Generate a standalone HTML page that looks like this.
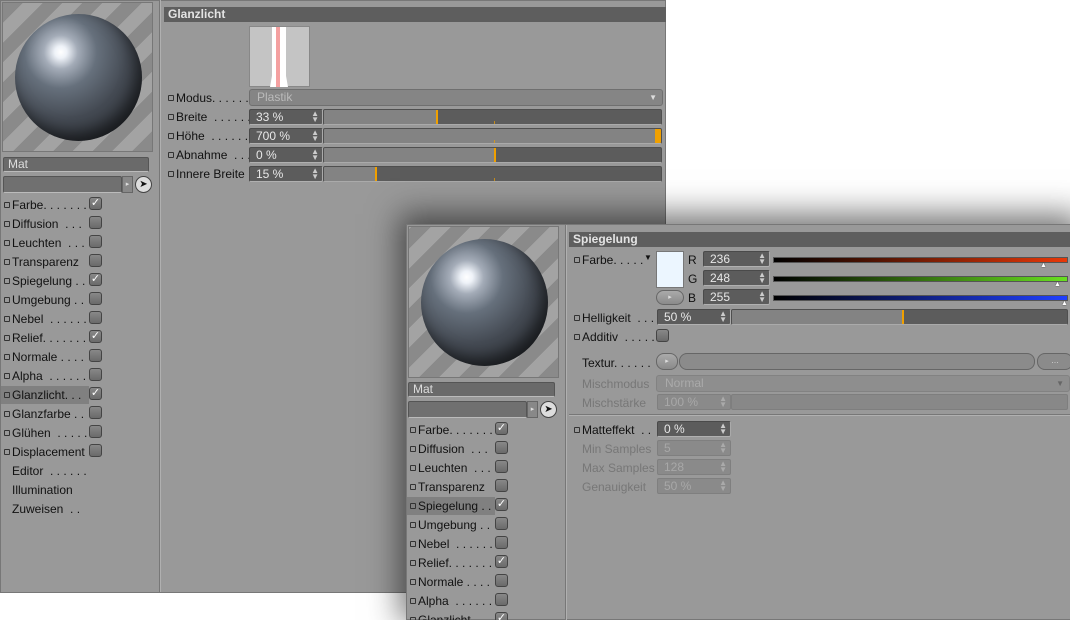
<!DOCTYPE html>
<html style="overflow:hidden;width:1070px;height:620px"><head><meta charset="utf-8"><style>
*{margin:0;padding:0;box-sizing:border-box}
body{width:1070px;height:620px;background:#fff;position:relative;overflow:hidden;font-family:"Liberation Sans",sans-serif;font-size:12px;color:#111}
.a{position:absolute}
.win{position:absolute;background:#999;border:1px solid #777}
.prev{position:absolute;background:repeating-linear-gradient(-45deg,#8a8a8a 0 14px,#a3a3a3 14px 28px);border:1px solid #777;overflow:hidden}
.sph{position:absolute;border-radius:50%;background:radial-gradient(circle at 36% 30%,#fff 0,#eef2f8 5%,#a4acb8 14%,#66707c 30%,#454b54 55%,#30343a 80%,#24262a 100%);box-shadow:inset -6px -8px 14px rgba(0,0,0,.5)}
.fld{position:absolute;background:#5c5c5c;border:1px solid #4a4a4a;border-bottom-color:#b0b0b0;border-right-color:#aaa;border-radius:2px;color:#e8e8e8;font-size:12px;padding-left:6px;line-height:14px}
.fld.dis{background:#8a8a8a;color:#a8a8a8;border-color:#7f7f7f}
.arr{position:absolute;right:3px;top:1px;font-size:8px;line-height:6px;color:#ccc}
.sl{position:absolute;background:#5c5c5c;border:1px solid #4f4f4f;border-bottom-color:#aaa;border-radius:2px;overflow:hidden}
.sl .f{position:absolute;left:0;top:0;bottom:0;background:#838383}
.sl .k{position:absolute;top:0;bottom:0;width:2px;background:#f0a000}
.hdr{position:absolute;background:#5e5e5e;color:#e4e4e4;font-weight:bold;font-size:12px;padding-left:4px;line-height:15px}
.lb{position:absolute;font-size:12px;line-height:14px;white-space:nowrap}
.lb i{position:absolute;left:-8px;top:4px;width:6px;height:6px;border:1px solid #333;border-radius:1px}
.dim{color:#777}
.cb{position:absolute;width:13px;height:13px;border:1px solid #444;border-radius:3px;background:linear-gradient(#888,#6a6a6a);color:#fff;font-size:11px;line-height:11px;text-align:center}
.mat{position:absolute;background:#6a6a6a;border:1px solid #555;border-bottom-color:#bbb;border-radius:2px;color:#ddd;padding-left:4px;font-size:12px;line-height:13px}
.btn{position:absolute;border:1px solid #666;background:linear-gradient(#aaa,#8a8a8a);border-radius:8px}
.sel{position:absolute;background:#808080}
</style></head><body>

<div class="win" style="left:0;top:0;width:666px;height:593px"></div>
<div class="a" style="left:159px;top:0;width:1px;height:592px;background:#777"></div>
<div class="a" style="left:160px;top:0;width:1px;height:592px;background:#b0b0b0"></div>
<div class="prev" style="left:2px;top:2px;width:151px;height:150px"><div class="sph" style="left:12px;top:11px;width:127px;height:127px"></div></div>
<div class="mat" style="left:3px;top:157px;width:146px;height:15px">Mat</div>
<div class="mat" style="left:3px;top:176px;width:119px;height:17px;background:#707070"></div>
<div class="a" style="left:122px;top:176px;width:11px;height:17px;background:#888;border:1px solid #666;color:#ddd;font-size:7px;line-height:15px;text-align:center">▸</div>
<div class="a" style="left:135px;top:176px;width:17px;height:17px;border:1px solid #444;border-radius:50%;background:#ddd;font-size:10px;line-height:15px;text-align:center">➤</div>
<div class="sel" style="left:1px;top:386px;width:88px;height:18px"></div>

<div class="lb" style="left:12px;top:198px"><i></i>Farbe. . . . . . .</div><div class="cb" style="left:89px;top:197px">✓</div>
<div class="lb" style="left:12px;top:217px"><i></i>Diffusion&nbsp; . . .</div><div class="cb" style="left:89px;top:216px"></div>
<div class="lb" style="left:12px;top:236px"><i></i>Leuchten&nbsp; . . .</div><div class="cb" style="left:89px;top:235px"></div>
<div class="lb" style="left:12px;top:255px"><i></i>Transparenz</div><div class="cb" style="left:89px;top:254px"></div>
<div class="lb" style="left:12px;top:274px"><i></i>Spiegelung . .</div><div class="cb" style="left:89px;top:273px">✓</div>
<div class="lb" style="left:12px;top:293px"><i></i>Umgebung . .</div><div class="cb" style="left:89px;top:292px"></div>
<div class="lb" style="left:12px;top:312px"><i></i>Nebel&nbsp; . . . . . .</div><div class="cb" style="left:89px;top:311px"></div>
<div class="lb" style="left:12px;top:331px"><i></i>Relief. . . . . . .</div><div class="cb" style="left:89px;top:330px">✓</div>
<div class="lb" style="left:12px;top:350px"><i></i>Normale . . . .</div><div class="cb" style="left:89px;top:349px"></div>
<div class="lb" style="left:12px;top:369px"><i></i>Alpha&nbsp; . . . . . .</div><div class="cb" style="left:89px;top:368px"></div>
<div class="lb" style="left:12px;top:388px"><i></i>Glanzlicht. . .</div><div class="cb" style="left:89px;top:387px">✓</div>
<div class="lb" style="left:12px;top:407px"><i></i>Glanzfarbe . .</div><div class="cb" style="left:89px;top:406px"></div>
<div class="lb" style="left:12px;top:426px"><i></i>Glühen&nbsp; . . . . .</div><div class="cb" style="left:89px;top:425px"></div>
<div class="lb" style="left:12px;top:445px"><i></i>Displacement</div><div class="cb" style="left:89px;top:444px"></div>
<div class="lb" style="left:12px;top:464px">Editor&nbsp; . . . . . .</div>
<div class="lb" style="left:12px;top:483px">Illumination</div>
<div class="lb" style="left:12px;top:502px">Zuweisen&nbsp; . .</div>

<div class="hdr" style="left:164px;top:7px;width:502px;height:15px">Glanzlicht</div>
<div class="a" style="left:249px;top:26px;width:61px;height:61px;background:#c4c4c4;border:1px solid #888"><div class="a" style="left:22px;top:0;width:14px;height:60px;background:#fff"></div><div class="a" style="left:20px;top:40px;width:18px;height:20px;background:#fff;clip-path:polygon(20% 0,80% 0,100% 100%,0 100%)"></div><div class="a" style="left:26px;top:0;width:4px;height:60px;background:#f4a0a0"></div></div>
<div class="lb" style="left:176px;top:91px"><i></i>Modus. . . . . . . .</div>
<div class="a" style="left:249px;top:89px;width:414px;height:17px;background:#858585;border:1px solid #6f6f6f;border-radius:3px;color:#bbb;padding-left:7px;line-height:15px">Plastik<span style="position:absolute;right:5px;top:0;font-size:8px;color:#ddd">▼</span></div>
<div class="lb" style="left:176px;top:110px"><i></i>Breite&nbsp; . . . . . .</div>
<div class="fld" style="left:249px;top:109px;width:74px;height:16px">33 %<span class="arr">▲<br>▼</span></div>
<div class="sl" style="left:323px;top:109px;width:339px;height:16px"><div class="f" style="width:112px"></div><div class="k" style="left:112px"></div><div class="k" style="left:170px;top:11px;width:1px;opacity:.7"></div></div>
<div class="lb" style="left:176px;top:129px"><i></i>Höhe&nbsp; . . . . . . .</div>
<div class="fld" style="left:249px;top:128px;width:74px;height:16px">700 %<span class="arr">▲<br>▼</span></div>
<div class="sl" style="left:323px;top:128px;width:339px;height:16px"><div class="f" style="width:339px"></div><div class="k" style="left:331px;width:8px"></div><div class="k" style="left:170px;top:11px;width:1px;opacity:.7"></div></div>
<div class="lb" style="left:176px;top:148px"><i></i>Abnahme&nbsp; . . .</div>
<div class="fld" style="left:249px;top:147px;width:74px;height:16px">0 %<span class="arr">▲<br>▼</span></div>
<div class="sl" style="left:323px;top:147px;width:339px;height:16px"><div class="f" style="width:170px"></div><div class="k" style="left:170px"></div></div>
<div class="lb" style="left:176px;top:167px"><i></i>Innere Breite</div>
<div class="fld" style="left:249px;top:166px;width:74px;height:16px">15 %<span class="arr">▲<br>▼</span></div>
<div class="sl" style="left:323px;top:166px;width:339px;height:16px"><div class="f" style="width:51px"></div><div class="k" style="left:51px"></div><div class="k" style="left:170px;top:11px;width:1px;opacity:.7"></div></div>

<div class="win" style="left:406px;top:224px;width:670px;height:396px;box-shadow:0 -4px 30px 6px rgba(0,0,0,.55)"></div>
<div class="a" style="left:565px;top:225px;width:1px;height:395px;background:#777"></div>
<div class="a" style="left:566px;top:225px;width:1px;height:395px;background:#b0b0b0"></div>
<div class="prev" style="left:408px;top:226px;width:151px;height:152px"><div class="sph" style="left:12px;top:12px;width:127px;height:127px"></div></div>
<div class="mat" style="left:408px;top:382px;width:147px;height:15px">Mat</div>
<div class="mat" style="left:408px;top:401px;width:119px;height:17px;background:#707070"></div>
<div class="a" style="left:527px;top:401px;width:11px;height:17px;background:#888;border:1px solid #666;color:#ddd;font-size:7px;line-height:15px;text-align:center">▸</div>
<div class="a" style="left:540px;top:401px;width:17px;height:17px;border:1px solid #444;border-radius:50%;background:#ddd;font-size:10px;line-height:15px;text-align:center">➤</div>
<div class="sel" style="left:407px;top:497px;width:88px;height:18px"></div>

<div class="lb" style="left:418px;top:423px"><i></i>Farbe. . . . . . .</div><div class="cb" style="left:495px;top:422px">✓</div>
<div class="lb" style="left:418px;top:442px"><i></i>Diffusion&nbsp; . . .</div><div class="cb" style="left:495px;top:441px"></div>
<div class="lb" style="left:418px;top:461px"><i></i>Leuchten&nbsp; . . .</div><div class="cb" style="left:495px;top:460px"></div>
<div class="lb" style="left:418px;top:480px"><i></i>Transparenz</div><div class="cb" style="left:495px;top:479px"></div>
<div class="lb" style="left:418px;top:499px"><i></i>Spiegelung . .</div><div class="cb" style="left:495px;top:498px">✓</div>
<div class="lb" style="left:418px;top:518px"><i></i>Umgebung . .</div><div class="cb" style="left:495px;top:517px"></div>
<div class="lb" style="left:418px;top:537px"><i></i>Nebel&nbsp; . . . . . .</div><div class="cb" style="left:495px;top:536px"></div>
<div class="lb" style="left:418px;top:556px"><i></i>Relief. . . . . . .</div><div class="cb" style="left:495px;top:555px">✓</div>
<div class="lb" style="left:418px;top:575px"><i></i>Normale . . . .</div><div class="cb" style="left:495px;top:574px"></div>
<div class="lb" style="left:418px;top:594px"><i></i>Alpha&nbsp; . . . . . .</div><div class="cb" style="left:495px;top:593px"></div>
<div class="lb" style="left:418px;top:613px"><i></i>Glanzlicht. . .</div><div class="cb" style="left:495px;top:612px">✓</div>

<div class="hdr" style="left:569px;top:232px;width:501px;height:15px">Spiegelung</div>
<div class="lb" style="left:582px;top:253px"><i></i>Farbe. . . . .</div>
<div class="a" style="left:644px;top:253px;font-size:8px">▼</div>
<div class="a" style="left:656px;top:251px;width:28px;height:37px;background:#ecf6ff;border:1px solid #777"></div>
<div class="btn" style="left:656px;top:290px;width:28px;height:15px;color:#ddd;font-size:7px;line-height:13px;text-align:center">▸</div>
<div class="lb" style="left:688px;top:253px">R</div>
<div class="lb" style="left:688px;top:272px">G</div>
<div class="lb" style="left:688px;top:291px">B</div>
<div class="fld" style="left:703px;top:251px;width:67px;height:16px">236<span class="arr">▲<br>▼</span></div>
<div class="fld" style="left:703px;top:270px;width:67px;height:16px">248<span class="arr">▲<br>▼</span></div>
<div class="fld" style="left:703px;top:289px;width:67px;height:16px">255<span class="arr">▲<br>▼</span></div>
<div class="a" style="left:773px;top:257px;width:295px;height:6px;background:linear-gradient(90deg,#000,#e83808);border:1px solid #555"></div>
<div class="a" style="left:773px;top:276px;width:295px;height:6px;background:linear-gradient(90deg,#000,#68e020);border:1px solid #555"></div>
<div class="a" style="left:773px;top:295px;width:295px;height:6px;background:linear-gradient(90deg,#000,#2040ff);border:1px solid #555"></div>
<div class="a" style="left:1040px;top:262px;font-size:7px;color:#fff;text-shadow:0 0 1px #000">▲</div>
<div class="a" style="left:1054px;top:281px;font-size:7px;color:#fff;text-shadow:0 0 1px #000">▲</div>
<div class="a" style="left:1061px;top:300px;font-size:7px;color:#fff;text-shadow:0 0 1px #000">▲</div>
<div class="lb" style="left:582px;top:311px"><i></i>Helligkeit&nbsp; . . .</div>
<div class="fld" style="left:657px;top:309px;width:74px;height:16px">50 %<span class="arr">▲<br>▼</span></div>
<div class="sl" style="left:731px;top:309px;width:337px;height:16px"><div class="f" style="width:170px"></div><div class="k" style="left:170px"></div></div>
<div class="lb" style="left:582px;top:330px"><i></i>Additiv&nbsp; . . . . .</div>
<div class="cb" style="left:656px;top:329px"></div>
<div class="lb" style="left:582px;top:356px">Textur. . . . . .</div>
<div class="btn" style="left:656px;top:353px;width:22px;height:17px;color:#ddd;font-size:7px;line-height:15px;text-align:center">▸</div>
<div class="btn" style="left:679px;top:353px;width:356px;height:17px;background:#8b8b8b"></div>
<div class="btn" style="left:1037px;top:353px;width:36px;height:17px;background:#8b8b8b;color:#ccc;font-size:9px;text-align:center;line-height:13px">...</div>
<div class="lb dim" style="left:582px;top:377px">Mischmodus</div>
<div class="a" style="left:656px;top:375px;width:414px;height:17px;background:#8e8e8e;border:1px solid #828282;border-radius:3px;color:#aaa;padding-left:8px;line-height:15px">Normal<span style="position:absolute;right:5px;top:0;font-size:8px;color:#666">▼</span></div>
<div class="lb dim" style="left:582px;top:396px">Mischstärke</div>
<div class="fld dis" style="left:657px;top:394px;width:74px;height:16px">100 %<span class="arr" style="color:#aaa">▲<br>▼</span></div>
<div class="sl" style="left:731px;top:394px;width:337px;height:16px;background:#888;border-color:#7e7e7e"></div>
<div class="a" style="left:569px;top:414px;width:501px;height:1px;background:#777"></div>
<div class="a" style="left:569px;top:415px;width:501px;height:1px;background:#b0b0b0"></div>
<div class="lb" style="left:582px;top:423px"><i></i>Matteffekt&nbsp; . .</div>
<div class="fld" style="left:657px;top:421px;width:74px;height:16px">0 %<span class="arr">▲<br>▼</span></div>
<div class="lb dim" style="left:582px;top:442px">Min Samples</div>
<div class="fld dis" style="left:657px;top:440px;width:74px;height:16px">5<span class="arr" style="color:#aaa">▲<br>▼</span></div>
<div class="lb dim" style="left:582px;top:461px">Max Samples</div>
<div class="fld dis" style="left:657px;top:459px;width:74px;height:16px">128<span class="arr" style="color:#aaa">▲<br>▼</span></div>
<div class="lb dim" style="left:582px;top:480px">Genauigkeit</div>
<div class="fld dis" style="left:657px;top:478px;width:74px;height:16px">50 %<span class="arr" style="color:#aaa">▲<br>▼</span></div>
</body></html>
